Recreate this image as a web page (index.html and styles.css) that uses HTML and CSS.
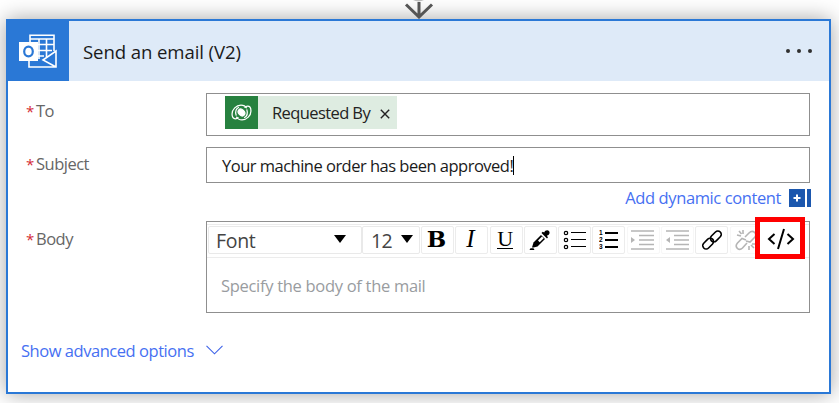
FILE: index.html
```
<!DOCTYPE html>
<html lang="en">
<head>
<meta charset="utf-8">
<title>Send an email (V2)</title>
<link rel="stylesheet" href="styles.css">
</head>
<body>
<main class="canvas">
  <section class="card">
    <svg class="connector" width="32" height="19" viewBox="0 0 32 19" fill="none">
      <circle cx="15.500" cy="-9" r="10.500" fill="#bdbdbd"/>
      <path d="M16 2v15M3 4.500l13 12.500L29 4.500" stroke="#555" stroke-width="3"/>
    </svg>
    <header class="header">
      <div class="app-icon">
        <svg width="38" height="34" viewBox="0 0 38 34" fill="none">
          <path d="M11 8V1.200h24V17M10 27v6h27V17L24 26l13 7M11 5h24M19 10.500h16M19 16.500h14M19 22h6M20 5v20M27.500 5v18" stroke="#fff" stroke-width="1.600"/>
          <path d="M0 8h19v19H0z" fill="#fff"/>
          <ellipse cx="9.500" cy="17.500" rx="4.300" ry="4.900" stroke="#2a78d6" stroke-width="2.200"/>
        </svg>
      </div>
      <h1 class="title"><span class="t-title">Send an email (V2)</span></h1>
      <div class="dots"><i></i><i></i><i></i></div>
    </header>
    <div class="form">
      <div class="row row-to">
        <div class="label"><b>*</b><span class="t-label">To</span></div>
        <div class="field field-to">
          <div class="token">
            <div class="token-icon">
              <svg width="21" height="17" viewBox="0 0 20 16" fill="none" stroke="#fff" stroke-width="1.200">
                <path d="M15 4C13.500 1.500 11.500 1 9.500 1 5 1 1 5 1 9.500c0 2.700 1.200 4.500 3.200 4.500 1.300 0 2.300-.8 2.800-1.500"/>
                <path d="M5 12c1.500 2.500 3.500 3 5.500 3C15 15 19 11 19 6.500 19 3.800 17.800 2 15.800 2c-1.300 0-2.300.8-2.800 1.500"/>
                <path d="M12.500 13c3-1.500 3.500-5 2.500-8M7.500 3C4.500 4.500 4 8 5 11"/>
                <ellipse cx="10" cy="8" rx="3.600" ry="2.600" transform="rotate(45 10 8)" fill="#fff"/>
              </svg>
            </div>
            <span class="token-name"><span class="t-token">Requested By</span></span>
            <svg class="remove" width="10" height="10" viewBox="0 0 10 10"><path d="M.8.8l8.400 8.400M9.200.8L.8 9.200" stroke="#222" stroke-width="1.400"/></svg>
          </div>
        </div>
      </div>
      <div class="row row-subject">
        <div class="label"><b>*</b><span class="t-label">Subject</span></div>
        <div class="field field-subject"><span class="t-value">Your machine order has been approved!</span><i class="caret"></i></div>
      </div>
      <div class="dynamic"><span class="t-dynamic">Add dynamic content</span><span class="plus"><svg width="8" height="8" viewBox="0 0 8 8"><path d="M4 .5v7M.5 4h7" stroke="#fff" stroke-width="2"/></svg></span><i class="plus-bar"></i></div>
      <div class="row row-body">
        <div class="label"><b>*</b><span class="t-label">Body</span></div>
        <div class="field editor">
          <div class="toolbar">
            <div class="select select-font"><span class="t-font">Font</span><i class="arrow"></i></div>
            <div class="select select-size"><span class="t-size">12</span><i class="arrow"></i></div>
            <div class="tools">
              <div class="tool bold">B</div>
              <div class="tool italic">I</div>
              <div class="tool underline"><span>U</span></div>
              <div class="tool"><svg width="22" height="22" viewBox="0 0 22 22"><path d="M3 18.500l1.500-5L12 6l4 4-7.500 7.500-4 1z" fill="#000"/><path d="M9 11.500l4-4 1.700 1.700-4 4z" fill="#fff"/><path d="M12.500 4l5.500 5.500 1-1.200-1.200-1.500C20.500 6 21.300 3.500 20 2s-4-1-4.800 1.500l-1.500-.8z" fill="#000"/><path d="M.5 21h5l-1-1.700H1.500z" fill="#000"/></svg></div>
              <div class="tool"><svg width="24" height="20" viewBox="0 0 24 20" fill="none" stroke="#000"><g stroke-width="1.200"><circle cx="3" cy="3" r="1.700"/><circle cx="3" cy="10" r="1.700"/><circle cx="3" cy="17" r="1.700"/></g><path d="M8 2.500h15M8 9.500h15M8 16.500h15"/></svg></div>
              <div class="tool"><svg width="20" height="20" viewBox="0 0 20 20"><path d="M6 3h13M6 10h13M6 17h13" stroke="#000" stroke-width="2"/><g class="nums"><text x="0" y="5">1</text><text x="0" y="12">2</text><text x="0" y="19">3</text></g></svg></div>
              <div class="tool off"><svg width="24" height="20" viewBox="0 0 24 20"><path d="M0 1h23M8 5.500h15M8 10h15M8 14.500h15M0 19h23" stroke="#b5b5b5" stroke-width="1.700"/><path d="M0 7l4 3-4 3z" fill="#b5b5b5"/></svg></div>
              <div class="tool off"><svg width="24" height="20" viewBox="0 0 24 20"><path d="M0 1h23M8 5.500h15M8 10h15M8 14.500h15M0 19h23" stroke="#b5b5b5" stroke-width="1.700"/><path d="M4 7l-4 3 4 3z" fill="#b5b5b5"/></svg></div>
              <div class="tool"><svg width="22" height="22" viewBox="0 0 22 22" fill="none" stroke="#000" stroke-width="1.600"><rect x="8.600" y="4" width="12.500" height="6.800" rx="3.400" transform="rotate(-45 14.850 7.400)"/><rect x=".9" y="11.200" width="12.500" height="6.800" rx="3.400" transform="rotate(-45 7.150 14.600)"/></svg></div>
              <div class="tool off"><svg width="22" height="22" viewBox="0 0 22 22" fill="none" stroke="#b5b5b5" stroke-width="1.600"><path d="M10 8l4-4c4-4 9 1 5.500 4.500L15 13l-4-1M12 14l-4.500 5C4 22.500-1 18 2.500 14L7 9.500l4 1.500M8 1v4M2 6l4 1M4 2l2.500 3M14 17v4M16 16l3 3M17 15h4"/></svg></div>
              <div class="tool code"><i class="highlight"></i><svg width="28" height="22" viewBox="0 0 28 22" fill="none" stroke="#000" stroke-width="2"><path d="M7.500 6L2 11l5.500 5M20.500 6l5.500 5-5.500 5M17 1l-6 20"/></svg></div>
            </div>
          </div>
          <div class="placeholder"><span class="t-placeholder">Specify the body of the mail</span></div>
        </div>
      </div>
      <div class="advanced"><span class="t-advanced">Show advanced options</span><svg width="17" height="10" viewBox="0 0 17 10" fill="none"><path d="M.5.8l8 8 8-8" stroke="#3d62e8" stroke-width="1.100"/></svg></div>
    </div>
  </section>
</main>
</body>
</html>
```
FILE: styles.css
```
* { box-sizing: border-box; }
body { margin: 0; background: #fff; font-family: "Open Sans", "Noto Sans", sans-serif; font-size: 16.5px; font-weight: 400; overflow: hidden; }
svg { display: block; flex: none; }
.canvas { height: 403px; padding: 19px 8px 9px 6px; }
.card { position: relative; width: 825px; height: 375px; border: 2px solid #2a78d6; background: #fff; box-shadow: 0 0 20px rgba(0,0,0,.36); }
.connector { position: absolute; left: 395px; top: -21px; }
.header { display: flex; align-items: center; height: 60px; background: #deeaf8; }
.app-icon { width: 61px; height: 60px; padding: 13px 0 0 11px; background: #2a78d6; }
.title { margin: 1px 0 0 14px; font-size: 18.6px; font-weight: 400; line-height: 24px; color: #1a1a1a; }
.dots { display: flex; gap: 7px; margin: 0 17px 0 auto; }
.dots i { width: 4px; height: 4px; border-radius: 50%; background: #303030; }
span { white-space: nowrap; }
.form { padding: 12px 19px 0 13px; }
.row { display: flex; }
.label { display: flex; flex: none; width: 185px; padding-left: 5px; color: #666; line-height: 22px; }
.label b { width: 10px; font-weight: 400; color: #d42a35; font-size: 15px; }
.field { flex: 1; min-width: 0; border: 1px solid #8f8f8f; background: #fff; }
.field-to { height: 43px; padding: 2px 0 0 18px; }
.row-to .label { padding-top: 7px; }
.token { display: flex; align-items: center; width: 172px; height: 33px; background: #deece1; }
.token-icon { display: grid; place-items: center; width: 33px; height: 33px; background: #27813f; }
.token-name { width: 108px; margin-left: 14px; color: #222; }
.remove { margin: 3px 0 0; }
.row-subject { margin-top: 11px; }
.row-subject .label { padding-top: 6px; }
.field-subject { display: flex; align-items: center; height: 36px; padding-left: 15px; color: #1a1a1a; }
.caret { width: 1px; height: 19px; background: #000; }
.dynamic { display: flex; align-items: center; height: 18px; margin: 6px 0 0; justify-content: flex-end; color: #4670f2; line-height: 20px; }
.t-dynamic { padding-bottom: 1px; }
.plus { display: grid; place-items: center; width: 16px; height: 18px; margin-left: 8px; background: #1b57ae; }
.plus-bar { width: 4px; height: 18px; margin: 0 -1px 0 2px; background: #1b57ae; }
.row-body { margin-top: 14px; }
.row-body .label { padding-top: 7px; }
.editor { height: 92px; }
.toolbar { display: flex; align-items: flex-start; height: 34px; margin-top: 2px; padding-top: 1px; border: solid #ececec; border-width: 1px 0; }
.select { display: flex; flex: none; align-items: center; justify-content: space-between; height: 28px; border: 1px solid #e9e9e9; border-radius: 2px; color: #444; font-size: 19.5px; }
.select-font { width: 154px; margin-left: 1px; padding: 0 15px 0 7px; }
.select-size { width: 58px; padding: 0 6px 0 8px; }
.arrow { border: solid transparent; border-width: 8px 6px 0; border-top-color: #000; margin-top: -3px; }
.tools { display: flex; gap: 1.300px; margin-left: 1px; }
.tool { display: grid; flex: none; place-items: center; width: 33px; height: 28px; border: 1px solid #ececec; border-radius: 2px; font-family: "Liberation Serif", serif; color: #000; line-height: 24px; }
.off { border-color: #f7f7f7; }
.bold { padding: 0 2px 2px 0; font: 700 23px/22px "DejaVu Serif", serif; }
.italic { padding: 0 3px 2px 0; font-size: 25px; font-style: italic; }
.underline { padding: 0 2px 1px 0; font-size: 22px; }
.underline span { height: 19px; line-height: 17px; border-bottom: 1px solid #000; }
.nums { font: 700 6.500px "Liberation Sans", sans-serif; }
.code { position: relative; width: 46px; margin-left: -7px; }
.code svg { position: relative; margin: -3px 0 0 3px; }
.highlight { position: absolute; left: -3px; top: -10px; width: 50px; height: 42px; border: 5px solid #f00; background: #fff; }
.placeholder { padding: 16px 0 0 14px; line-height: 24px; color: #999ca0; }
.advanced { display: flex; align-items: center; height: 24px; margin-top: 25px; color: #4670f2; }
.advanced svg { margin-left: 12px; }
.t-title { letter-spacing: -.1px; }
.t-label { letter-spacing: -.5px; }
.t-value { letter-spacing: -.51px; }
.t-token { letter-spacing: -.6px; }
.t-dynamic { letter-spacing: -.4px; }
.t-placeholder { letter-spacing: -.3px; }
.t-advanced { letter-spacing: -.46px; }
.t-font { letter-spacing: -.3px; }
.t-size { letter-spacing: -.6px; }
```
